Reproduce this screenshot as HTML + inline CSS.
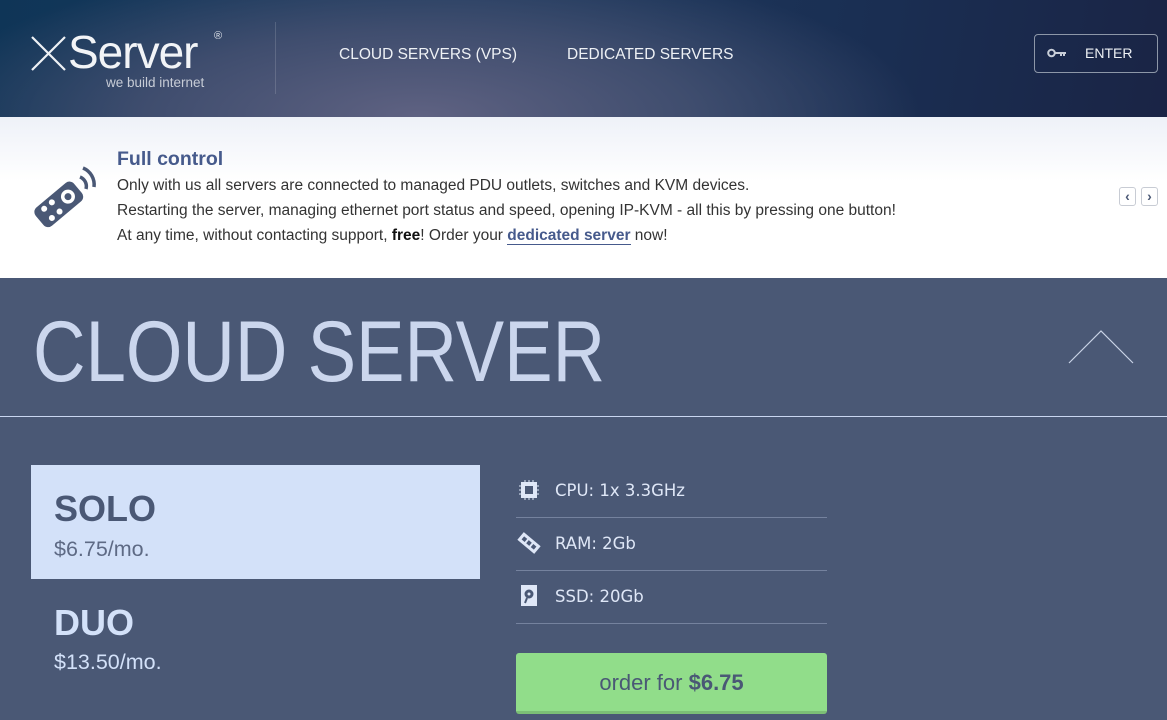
<!DOCTYPE html>
<html><head><meta charset="utf-8"><style>
*{margin:0;padding:0;box-sizing:border-box}
body{width:1167px;height:720px;overflow:hidden;font-family:"Liberation Sans",sans-serif;background:#4a5875;position:relative}
.hdr{position:absolute;left:0;top:0;width:1167px;height:117px;background:radial-gradient(ellipse 500px 160px at 420px 117px,#5f6282 0%,#3f4d6e 55%,rgba(20,40,70,0) 100%),linear-gradient(100deg,#0f3557 0%,#1d3a5e 40%,#1a2e52 75%,#1a2445 100%)}
.logo{position:absolute;left:30px;top:25px;color:#f2f4f7;font-size:46px;letter-spacing:-1px}
.reg{position:absolute;left:214px;top:30px;color:#dfe3ea;font-size:11px}
.tag{position:absolute;left:106px;top:75px;color:#c7ccd6;font-size:13.5px}
.sep{position:absolute;left:275px;top:22px;width:1px;height:72px;background:rgba(255,255,255,.15)}
.nav{position:absolute;top:46px;color:#eef1f5;font-size:15.5px}
.enter{position:absolute;left:1034px;top:34px;width:124px;height:39px;border:1px solid #8d97a8;border-radius:4px;color:#eef1f5;font-size:14px}
.banner{position:absolute;left:0;top:117px;width:1167px;height:161px;background:linear-gradient(#eef1f8,#fff 40%)}
.bt{position:absolute;left:117px;top:148px;font-size:19.5px;font-weight:bold;color:#465a8c}
.bl{position:absolute;left:117px;font-size:15.5px;color:#333;white-space:nowrap}
.arr{position:absolute;top:187px;width:17px;height:19px;border:1px solid #c8ccd4;border-radius:3px;background:#fff;color:#4a5875;font-size:14px;line-height:16px;text-align:center;font-weight:bold}
.big{position:absolute;left:33px;top:303px;font-size:86px;color:#d9e4fb;transform:scaleX(.845);transform-origin:left;white-space:nowrap;opacity:.9}
.hr{position:absolute;left:0;top:416px;width:1167px;height:1px;background:#c9d6f0}
.solo{position:absolute;left:31px;top:465px;width:449px;height:114px;background:#d3e1f9}
.pn{position:absolute;left:54px;font-size:36px;font-weight:bold}
.pp{position:absolute;left:54px;font-size:21.5px}
.spec{position:absolute;left:555px;font-family:"DejaVu Sans",sans-serif;font-size:16.5px;color:#dfe7f7}
.line{position:absolute;left:516px;width:311px;height:1px;background:#75829e}
.btn{position:absolute;left:516px;top:653px;width:311px;height:61px;background:#91dd8a;border-radius:3px;border-bottom:3px solid #7cbf76;color:#4a5875;font-size:22px;text-align:center;line-height:60px}
</style></head><body>
<div class="hdr">
<div class="logo"><svg width="38" height="38" style="vertical-align:-4px" viewBox="0 0 38 38"><path d="M2 3 L35 36 M35 3 L2 36" stroke="#eef1f5" stroke-width="2.2"/></svg>Server</div>
<div class="reg">®</div>
<div class="tag">we build internet</div>
<div class="sep"></div>
<div class="nav" style="left:339px">CLOUD SERVERS (VPS)</div>
<div class="nav" style="left:567px">DEDICATED SERVERS</div>
<div class="enter"><svg style="position:absolute;left:12px;top:13px" width="20" height="10" viewBox="0 0 20 10"><circle cx="4.5" cy="5" r="3.3" fill="none" stroke="#c9cfd9" stroke-width="2"/><path d="M8 5H19M14 5V8M17 5V8" stroke="#c9cfd9" stroke-width="2"/></svg><span style="position:absolute;left:50px;top:10px">ENTER</span></div>
</div>
<div class="banner"></div>
<svg style="position:absolute;left:28px;top:163px" width="70" height="66" viewBox="0 0 70 66">
<g transform="rotate(50 30 42)"><rect x="18" y="16" width="24" height="50" rx="6" fill="#4a5875"/><circle cx="30" cy="29" r="7" fill="#fff"/><circle cx="30" cy="29" r="3.5" fill="#4a5875"/><circle cx="24" cy="45" r="3" fill="#fff"/><circle cx="36" cy="45" r="3" fill="#fff"/><circle cx="24" cy="55" r="3" fill="#fff"/><circle cx="36" cy="55" r="3" fill="#fff"/></g>
<path d="M52 14 A10 10 0 0 1 58 26" stroke="#4a5875" stroke-width="3.5" fill="none"/><path d="M55 5 A18 18 0 0 1 66 24" stroke="#4a5875" stroke-width="3.5" fill="none"/>
</svg>
<div class="bt">Full control</div>
<div class="bl" style="top:177px">Only with us all servers are connected to managed PDU outlets, switches and KVM devices.</div>
<div class="bl" style="top:202px">Restarting the server, managing ethernet port status and speed, opening IP-KVM - all this by pressing one button!</div>
<div class="bl" style="top:227px">At any time, without contacting support, <b style="color:#111">free</b>! Order your <span style="color:#465a8c;font-weight:bold;border-bottom:1px solid #465a8c">dedicated server</span> now!</div>
<div class="arr" style="left:1119px">‹</div><div class="arr" style="left:1141px">›</div>
<div class="big">CLOUD SERVER</div>
<svg style="position:absolute;left:1068px;top:330px" width="66" height="34"><path d="M1 33 L33 1 L65 33" stroke="#c9d3e6" stroke-width="1.2" fill="none"/></svg>
<div class="hr"></div>
<div class="solo"></div>
<div class="pn" style="top:488px;color:#4a5875">SOLO</div>
<div class="pp" style="top:537px;color:#5e6a85">$6.75/mo.</div>
<div class="pn" style="top:602px;color:#d3e1f9">DUO</div>
<div class="pp" style="top:650px;color:#d3e1f9">$13.50/mo.</div>
<svg style="position:absolute;left:518px;top:480px" width="22" height="20"><rect x="3" y="2" width="16" height="16" fill="#dfe7f7"/><rect x="7" y="6" width="8" height="8" fill="#4a5875"/><path d="M1 6H3M1 10H3M1 14H3M19 6H21M19 10H21M19 14H21M7 0V2M11 0V2M15 0V2M7 18V20M11 18V20M15 18V20" stroke="#dfe7f7"/></svg>
<div class="spec" style="top:481px">CPU: 1x 3.3GHz</div>
<div class="line" style="top:517px"></div>
<svg style="position:absolute;left:516px;top:530px" width="26" height="26"><g transform="rotate(40 13 13)"><rect x="2" y="8" width="22" height="10" fill="#dfe7f7"/><rect x="5" y="11" width="4" height="4" fill="#4a5875"/><rect x="11" y="11" width="4" height="4" fill="#4a5875"/><rect x="17" y="11" width="4" height="4" fill="#4a5875"/></g></svg>
<div class="spec" style="top:534px">RAM: 2Gb</div>
<div class="line" style="top:570px"></div>
<svg style="position:absolute;left:521px;top:585px" width="17" height="22"><rect x="0" y="0" width="16" height="21" fill="#dfe7f7"/><circle cx="8" cy="9" r="4.5" fill="#4a5875"/><circle cx="8" cy="9" r="1.5" fill="#dfe7f7"/><path d="M6 13L4 18" stroke="#4a5875" stroke-width="2"/></svg>
<div class="spec" style="top:587px">SSD: 20Gb</div>
<div class="line" style="top:623px"></div>
<div class="btn">order for <b>$6.75</b></div>
</body></html>
